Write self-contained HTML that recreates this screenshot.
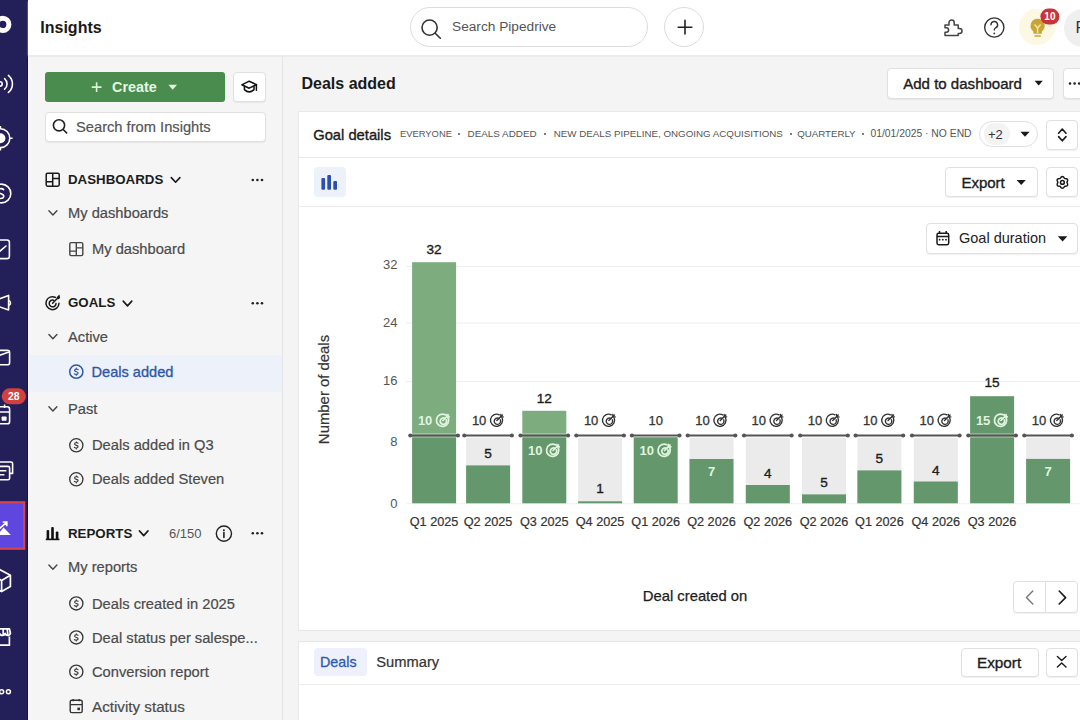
<!DOCTYPE html>
<html><head><meta charset="utf-8">
<style>
*{box-sizing:border-box;margin:0;padding:0}
html,body{width:1080px;height:720px;overflow:hidden;background:#f5f5f5;font-family:"Liberation Sans",sans-serif;color:#1f1f1f}
.a{position:absolute}
.t{position:absolute;white-space:nowrap;line-height:1}
#nav{left:0;top:0;width:28px;height:720px;background:#221f59;border-right:1.5px solid #17153c}
#top{left:28px;top:0;width:1052px;height:55px;background:#fff;box-shadow:0 1px 1.5px #e4e4e4}
#lp{left:28px;top:55px;width:255px;height:665px;background:#f5f5f5;border-right:1px solid #e4e4e4}
#main{left:283px;top:55px;width:797px;height:665px;background:#f4f4f4}
.card{background:#fff;border:1px solid #e8e8e8}
.btn{position:absolute;background:#fff;border:1px solid #e0e0e0;border-radius:4px;box-shadow:0 1px 1px rgba(0,0,0,.06)}
.item{color:#4b4b4b;font-size:14.7px;-webkit-text-stroke:0.2px currentColor}
.meta{top:129px;color:#555}.dot{top:132.8px;width:2px;height:2px;border-radius:1px;background:#555}
.med{color:#1c1c1c;-webkit-text-stroke:0.35px #1c1c1c}
.hdr{font-weight:700;font-size:13.3px;color:#1c1c1c}
</style></head><body>
<div id="nav" class="a"></div>
<div id="top" class="a"></div>
<div id="lp" class="a"></div>
<div id="main" class="a"></div>
<div class="a" style="left:28px;top:55px;width:1052px;height:2px;background:#ebebeb"></div>

<!-- top bar -->
<div class="t" style="left:40.3px;top:20px;font-size:16px;font-weight:700;color:#1a1a1a">Insights</div>
<div class="a" style="left:410px;top:7px;width:238px;height:40px;border:1px solid #dcdcdc;border-radius:20px;background:#fff"></div>
<div class="t" style="left:452px;top:20px;font-size:13.7px;color:#555">Search Pipedrive</div>
<div class="a" style="left:664px;top:7px;width:40px;height:40px;border:1px solid #dcdcdc;border-radius:20px;background:#fff"></div>
<div class="a" style="left:1019px;top:9px;width:36px;height:36px;border-radius:18px;background:#fcf8e2"></div>
<div class="a" style="left:1064px;top:9px;width:38px;height:38px;border-radius:19px;background:#efefef"></div>
<div class="t" style="left:1075.5px;top:19.5px;font-size:16px;color:#333">F</div>

<!-- left panel -->
<div class="a" style="left:45px;top:72px;width:180px;height:30px;background:#4a8c4e;border-radius:3px"></div>
<div class="t" style="left:112px;top:80px;font-size:14.4px;font-weight:700;color:#e3f7e3">Create</div>
<div class="btn" style="left:233px;top:72px;width:33px;height:30px"></div>
<div class="btn" style="left:45px;top:112px;width:221px;height:30px"></div>
<div class="t item" style="left:76px;top:120px;color:#555">Search from Insights</div>

<div class="t hdr" style="left:68px;top:173px">DASHBOARDS</div>
<div class="t item" style="left:68px;top:206px">My dashboards</div>
<div class="t item" style="left:92px;top:242px">My dashboard</div>

<div class="t hdr" style="left:68px;top:296px">GOALS</div>
<div class="t item" style="left:68px;top:330px">Active</div>
<div class="a" style="left:29px;top:355px;width:253px;height:37px;background:#edf1f9"></div>
<div class="t item" style="left:91.5px;top:364.6px;color:#2f56a6;font-size:14.6px;-webkit-text-stroke:0.3px #2f56a6">Deals added</div>
<div class="t item" style="left:68px;top:402px">Past</div>
<div class="t item" style="left:92px;top:438px">Deals added in Q3</div>
<div class="t item" style="left:92px;top:472px">Deals added Steven</div>

<div class="t hdr" style="left:68px;top:527px">REPORTS</div>
<div class="t" style="left:169px;top:527px;font-size:13px;color:#555">6/150</div>
<div class="t item" style="left:68px;top:560px">My reports</div>
<div class="t item" style="left:92px;top:597px">Deals created in 2025</div>
<div class="t item" style="left:92px;top:630.8px">Deal status per salespe...</div>
<div class="t item" style="left:92px;top:665px">Conversion report</div>
<div class="t item" style="left:92px;top:698.6px;font-size:15.2px">Activity status</div>

<!-- main -->
<div class="t" style="left:301.5px;top:75.5px;font-size:16px;font-weight:700;color:#1a1a1a">Deals added</div>
<div class="btn" style="left:887px;top:68px;width:167px;height:31px"></div>
<div class="t med" style="left:903.2px;top:75.7px;font-size:15.06px">Add to dashboard</div>
<div class="btn" style="left:1063px;top:68px;width:40px;height:31px"></div>

<div class="a card" style="left:298px;top:111px;width:800px;height:520px"></div>
<div class="a" style="left:298px;top:157px;width:782px;height:1px;background:#e8e8e8"></div>
<div class="a" style="left:298px;top:206px;width:782px;height:1px;background:#ececec"></div>
<div class="t med" style="left:313.2px;top:128px;font-size:14.74px">Goal details</div>
<div class="t meta" style="left:400px;font-size:9.4px">EVERYONE</div>
<div class="t meta" style="left:467.5px;font-size:9.9px">DEALS ADDED</div>
<div class="t meta" style="left:553.8px;font-size:9.78px">NEW DEALS PIPELINE, ONGOING ACQUISITIONS</div>
<div class="t meta" style="left:797.2px;font-size:9.7px">QUARTERLY</div>
<div class="t meta" style="left:870.4px;font-size:10.35px;top:128.6px">01/01/2025 · NO END</div>
<div class="a dot" style="left:458.4px"></div><div class="a dot" style="left:544.4px"></div><div class="a dot" style="left:789.5px"></div><div class="a dot" style="left:861.7px"></div>
<div class="a" style="left:979px;top:121px;width:59px;height:26px;border:1px solid #e0e0e0;border-radius:13px;background:#fff"></div>
<div class="a" style="left:984px;top:123px;width:26px;height:22px;border-radius:11px;background:#f3f3f3"></div>
<div class="t" style="left:988px;top:128px;font-size:13px;color:#333">+2</div>
<div class="btn" style="left:1046px;top:120px;width:32px;height:30px"></div>

<div class="a" style="left:314px;top:167px;width:32px;height:30px;background:#edf1f9;border-radius:4px"></div>
<div class="btn" style="left:945px;top:167px;width:93px;height:30px"></div>
<div class="t med" style="left:961.4px;top:174.8px;font-size:15px">Export</div>
<div class="btn" style="left:1046px;top:167px;width:32px;height:30px"></div>

<div class="btn" style="left:926px;top:223px;width:152px;height:31px"></div>
<div class="t" style="left:959px;top:231px;font-size:14.5px;color:#222">Goal duration</div>

<div class="t med" style="left:642.8px;top:589px;font-size:14.8px;-webkit-text-stroke:0.25px #1c1c1c">Deal created on</div>
<div class="btn" style="left:1013px;top:581px;width:65px;height:32px"></div>
<div class="a" style="left:1045px;top:582px;width:1px;height:30px;background:#e0e0e0"></div>

<div class="a card" style="left:298px;top:641px;width:800px;height:100px"></div>
<div class="a" style="left:298px;top:684px;width:782px;height:1px;background:#ececec"></div>
<div class="a" style="left:314px;top:648px;width:53px;height:28px;background:#eef1fb;border-radius:4px"></div>
<div class="t med" style="left:320px;top:655.1px;font-size:14.3px;color:#2f5bb0;-webkit-text-stroke:0.3px #2f5bb0">Deals</div>
<div class="t med" style="left:376.3px;top:655.1px;font-size:14.7px;color:#333;-webkit-text-stroke:0.2px #333">Summary</div>
<div class="btn" style="left:961px;top:648px;width:78px;height:29px"></div>
<div class="t med" style="left:977px;top:655.1px;font-size:15.3px">Export</div>
<div class="btn" style="left:1046px;top:648px;width:32px;height:29px"></div>

<!-- CHART -->
<svg class="a" style="left:0;top:0" width="1080" height="720" id="chart">
<rect x="406" y="266.0" width="674" height="1" fill="#ededed"/>
<rect x="406" y="322.5" width="674" height="1" fill="#ededed"/>
<rect x="406" y="381.0" width="674" height="1" fill="#ededed"/>
<rect x="406" y="503.3" width="674" height="1" fill="#f0f0f0"/>
<text x="397.5" y="269.1" text-anchor="end" font-size="13" fill="#555">32</text>
<text x="397.5" y="327.2" text-anchor="end" font-size="13" fill="#555">24</text>
<text x="397.5" y="385.4" text-anchor="end" font-size="13" fill="#555">16</text>
<text x="397.5" y="445.6" text-anchor="end" font-size="13" fill="#555">8</text>
<text x="397.5" y="508.1" text-anchor="end" font-size="13" fill="#555">0</text>
<rect x="412.1" y="262.2" width="44" height="173.3" fill="#7dac7f"/>
<rect x="412.1" y="435.5" width="44" height="67.8" fill="#65976c"/>
<rect x="466.1" y="437.5" width="44" height="65.8" fill="#eaebea"/>
<rect x="466.1" y="465.4" width="44" height="37.9" fill="#65976c"/>
<rect x="522.3" y="410.8" width="44" height="24.7" fill="#7dac7f"/>
<rect x="522.3" y="435.5" width="44" height="67.8" fill="#65976c"/>
<rect x="578.1" y="437.5" width="44" height="65.8" fill="#eaebea"/>
<rect x="578.1" y="501.3" width="44" height="2.0" fill="#65976c"/>
<rect x="633.7" y="437" width="44" height="66.3" fill="#65976c"/>
<rect x="689.5" y="437.5" width="44" height="65.8" fill="#eaebea"/>
<rect x="689.5" y="459" width="44" height="44.3" fill="#65976c"/>
<rect x="745.8" y="437.5" width="44" height="65.8" fill="#eaebea"/>
<rect x="745.8" y="485" width="44" height="18.3" fill="#65976c"/>
<rect x="802.0" y="437.5" width="44" height="65.8" fill="#eaebea"/>
<rect x="802.0" y="494.4" width="44" height="8.9" fill="#65976c"/>
<rect x="857.4" y="437.5" width="44" height="65.8" fill="#eaebea"/>
<rect x="857.4" y="470.4" width="44" height="32.9" fill="#65976c"/>
<rect x="913.8" y="437.5" width="44" height="65.8" fill="#eaebea"/>
<rect x="913.8" y="481.5" width="44" height="21.8" fill="#65976c"/>
<rect x="970.1" y="396.2" width="44" height="107.1" fill="#65976c"/>
<rect x="1026.1" y="437.5" width="44" height="65.8" fill="#eaebea"/>
<rect x="1026.1" y="458.9" width="44" height="44.4" fill="#65976c"/>
<line x1="409.3" y1="435.5" x2="458.9" y2="435.5" stroke="#fff" stroke-opacity="0.35" stroke-width="4.6"/>
<line x1="409.3" y1="435.5" x2="458.9" y2="435.5" stroke="#555" stroke-width="2.2"/>
<circle cx="410.3" cy="435.5" r="2.1" fill="#555"/><circle cx="457.9" cy="435.5" r="2.1" fill="#555"/>
<line x1="463.3" y1="435.5" x2="512.9" y2="435.5" stroke="#fff" stroke-opacity="0.35" stroke-width="4.6"/>
<line x1="463.3" y1="435.5" x2="512.9" y2="435.5" stroke="#555" stroke-width="2.2"/>
<circle cx="464.3" cy="435.5" r="2.1" fill="#555"/><circle cx="511.9" cy="435.5" r="2.1" fill="#555"/>
<line x1="519.5" y1="435.5" x2="569.1" y2="435.5" stroke="#fff" stroke-opacity="0.35" stroke-width="4.6"/>
<line x1="519.5" y1="435.5" x2="569.1" y2="435.5" stroke="#555" stroke-width="2.2"/>
<circle cx="520.5" cy="435.5" r="2.1" fill="#555"/><circle cx="568.1" cy="435.5" r="2.1" fill="#555"/>
<line x1="575.3" y1="435.5" x2="624.9" y2="435.5" stroke="#fff" stroke-opacity="0.35" stroke-width="4.6"/>
<line x1="575.3" y1="435.5" x2="624.9" y2="435.5" stroke="#555" stroke-width="2.2"/>
<circle cx="576.3" cy="435.5" r="2.1" fill="#555"/><circle cx="623.9" cy="435.5" r="2.1" fill="#555"/>
<line x1="630.9" y1="435.5" x2="680.5" y2="435.5" stroke="#fff" stroke-opacity="0.35" stroke-width="4.6"/>
<line x1="630.9" y1="435.5" x2="680.5" y2="435.5" stroke="#555" stroke-width="2.2"/>
<circle cx="631.9" cy="435.5" r="2.1" fill="#555"/><circle cx="679.5" cy="435.5" r="2.1" fill="#555"/>
<line x1="686.7" y1="435.5" x2="736.3" y2="435.5" stroke="#fff" stroke-opacity="0.35" stroke-width="4.6"/>
<line x1="686.7" y1="435.5" x2="736.3" y2="435.5" stroke="#555" stroke-width="2.2"/>
<circle cx="687.7" cy="435.5" r="2.1" fill="#555"/><circle cx="735.3" cy="435.5" r="2.1" fill="#555"/>
<line x1="743.0" y1="435.5" x2="792.6" y2="435.5" stroke="#fff" stroke-opacity="0.35" stroke-width="4.6"/>
<line x1="743.0" y1="435.5" x2="792.6" y2="435.5" stroke="#555" stroke-width="2.2"/>
<circle cx="744.0" cy="435.5" r="2.1" fill="#555"/><circle cx="791.6" cy="435.5" r="2.1" fill="#555"/>
<line x1="799.2" y1="435.5" x2="848.8" y2="435.5" stroke="#fff" stroke-opacity="0.35" stroke-width="4.6"/>
<line x1="799.2" y1="435.5" x2="848.8" y2="435.5" stroke="#555" stroke-width="2.2"/>
<circle cx="800.2" cy="435.5" r="2.1" fill="#555"/><circle cx="847.8" cy="435.5" r="2.1" fill="#555"/>
<line x1="854.6" y1="435.5" x2="904.2" y2="435.5" stroke="#fff" stroke-opacity="0.35" stroke-width="4.6"/>
<line x1="854.6" y1="435.5" x2="904.2" y2="435.5" stroke="#555" stroke-width="2.2"/>
<circle cx="855.6" cy="435.5" r="2.1" fill="#555"/><circle cx="903.2" cy="435.5" r="2.1" fill="#555"/>
<line x1="911.0" y1="435.5" x2="960.6" y2="435.5" stroke="#fff" stroke-opacity="0.35" stroke-width="4.6"/>
<line x1="911.0" y1="435.5" x2="960.6" y2="435.5" stroke="#555" stroke-width="2.2"/>
<circle cx="912.0" cy="435.5" r="2.1" fill="#555"/><circle cx="959.6" cy="435.5" r="2.1" fill="#555"/>
<line x1="967.3" y1="435.5" x2="1016.9" y2="435.5" stroke="#fff" stroke-opacity="0.35" stroke-width="4.6"/>
<line x1="967.3" y1="435.5" x2="1016.9" y2="435.5" stroke="#555" stroke-width="2.2"/>
<circle cx="968.3" cy="435.5" r="2.1" fill="#555"/><circle cx="1015.9" cy="435.5" r="2.1" fill="#555"/>
<line x1="1023.3" y1="435.5" x2="1072.9" y2="435.5" stroke="#fff" stroke-opacity="0.35" stroke-width="4.6"/>
<line x1="1023.3" y1="435.5" x2="1072.9" y2="435.5" stroke="#555" stroke-width="2.2"/>
<circle cx="1024.3" cy="435.5" r="2.1" fill="#555"/><circle cx="1071.9" cy="435.5" r="2.1" fill="#555"/>
<text x="417.9" y="424.9" font-size="13" fill="#dff5df" font-weight="700" stroke="#dff5df" stroke-width="0">10</text><g transform="translate(436.4,413.3)" fill="none" stroke="#dff5df" stroke-width="1.75" stroke-linecap="round"><path d="M11.6 4.2 A6.1 6.1 0 1 1 8.9 1.5"/><path d="M8.6 5.1 A3.2 3.2 0 1 0 9.9 6.5"/><path d="M6.5 7.2 L12 1.7"/><path d="M10.4 1.2 L10.6 3.4 L12.8 3.6"/></g>
<text x="434.1" y="253.5" text-anchor="middle" font-size="13.6" font-weight="400" fill="#1c1c1c" stroke="#1c1c1c" stroke-width="0.35">32</text>
<text x="471.9" y="424.9" font-size="13" fill="#333" font-weight="400" stroke="#333" stroke-width="0.3">10</text><g transform="translate(490.4,413.3)" fill="none" stroke="#333" stroke-width="1.4" stroke-linecap="round"><path d="M11.6 4.2 A6.1 6.1 0 1 1 8.9 1.5"/><path d="M8.6 5.1 A3.2 3.2 0 1 0 9.9 6.5"/><path d="M6.5 7.2 L12 1.7"/><path d="M10.4 1.2 L10.6 3.4 L12.8 3.6"/></g>
<text x="488.1" y="458.0" text-anchor="middle" font-size="13.6" font-weight="400" fill="#1c1c1c" stroke="#1c1c1c" stroke-width="0.35">5</text>
<text x="544.3" y="402.7" text-anchor="middle" font-size="13.6" font-weight="400" fill="#1c1c1c" stroke="#1c1c1c" stroke-width="0.35">12</text>
<text x="528.0" y="454.9" font-size="13" fill="#dff5df" font-weight="700" stroke="#dff5df" stroke-width="0">10</text><g transform="translate(546.5,443.3)" fill="none" stroke="#dff5df" stroke-width="1.75" stroke-linecap="round"><path d="M11.6 4.2 A6.1 6.1 0 1 1 8.9 1.5"/><path d="M8.6 5.1 A3.2 3.2 0 1 0 9.9 6.5"/><path d="M6.5 7.2 L12 1.7"/><path d="M10.4 1.2 L10.6 3.4 L12.8 3.6"/></g>
<text x="583.9" y="424.9" font-size="13" fill="#333" font-weight="400" stroke="#333" stroke-width="0.3">10</text><g transform="translate(602.4,413.3)" fill="none" stroke="#333" stroke-width="1.4" stroke-linecap="round"><path d="M11.6 4.2 A6.1 6.1 0 1 1 8.9 1.5"/><path d="M8.6 5.1 A3.2 3.2 0 1 0 9.9 6.5"/><path d="M6.5 7.2 L12 1.7"/><path d="M10.4 1.2 L10.6 3.4 L12.8 3.6"/></g>
<text x="600.1" y="493.0" text-anchor="middle" font-size="13.6" font-weight="400" fill="#1c1c1c" stroke="#1c1c1c" stroke-width="0.35">1</text>
<text x="655.7" y="425.0" text-anchor="middle" font-size="13" font-weight="400" fill="#333" stroke="#333" stroke-width="0.25">10</text>
<text x="639.5" y="454.9" font-size="13" fill="#dff5df" font-weight="700" stroke="#dff5df" stroke-width="0">10</text><g transform="translate(658.0,443.3)" fill="none" stroke="#dff5df" stroke-width="1.75" stroke-linecap="round"><path d="M11.6 4.2 A6.1 6.1 0 1 1 8.9 1.5"/><path d="M8.6 5.1 A3.2 3.2 0 1 0 9.9 6.5"/><path d="M6.5 7.2 L12 1.7"/><path d="M10.4 1.2 L10.6 3.4 L12.8 3.6"/></g>
<text x="695.2" y="424.9" font-size="13" fill="#333" font-weight="400" stroke="#333" stroke-width="0.3">10</text><g transform="translate(713.8,413.3)" fill="none" stroke="#333" stroke-width="1.4" stroke-linecap="round"><path d="M11.6 4.2 A6.1 6.1 0 1 1 8.9 1.5"/><path d="M8.6 5.1 A3.2 3.2 0 1 0 9.9 6.5"/><path d="M6.5 7.2 L12 1.7"/><path d="M10.4 1.2 L10.6 3.4 L12.8 3.6"/></g>
<text x="711.5" y="476.4" text-anchor="middle" font-size="13" font-weight="700" fill="#dff5df" stroke="#dff5df" stroke-width="0">7</text>
<text x="751.5" y="424.9" font-size="13" fill="#333" font-weight="400" stroke="#333" stroke-width="0.3">10</text><g transform="translate(770.0,413.3)" fill="none" stroke="#333" stroke-width="1.4" stroke-linecap="round"><path d="M11.6 4.2 A6.1 6.1 0 1 1 8.9 1.5"/><path d="M8.6 5.1 A3.2 3.2 0 1 0 9.9 6.5"/><path d="M6.5 7.2 L12 1.7"/><path d="M10.4 1.2 L10.6 3.4 L12.8 3.6"/></g>
<text x="767.8" y="478.2" text-anchor="middle" font-size="13.6" font-weight="400" fill="#1c1c1c" stroke="#1c1c1c" stroke-width="0.35">4</text>
<text x="807.8" y="424.9" font-size="13" fill="#333" font-weight="400" stroke="#333" stroke-width="0.3">10</text><g transform="translate(826.2,413.3)" fill="none" stroke="#333" stroke-width="1.4" stroke-linecap="round"><path d="M11.6 4.2 A6.1 6.1 0 1 1 8.9 1.5"/><path d="M8.6 5.1 A3.2 3.2 0 1 0 9.9 6.5"/><path d="M6.5 7.2 L12 1.7"/><path d="M10.4 1.2 L10.6 3.4 L12.8 3.6"/></g>
<text x="824.0" y="487.2" text-anchor="middle" font-size="13.6" font-weight="400" fill="#1c1c1c" stroke="#1c1c1c" stroke-width="0.35">5</text>
<text x="863.1" y="424.9" font-size="13" fill="#333" font-weight="400" stroke="#333" stroke-width="0.3">10</text><g transform="translate(881.6,413.3)" fill="none" stroke="#333" stroke-width="1.4" stroke-linecap="round"><path d="M11.6 4.2 A6.1 6.1 0 1 1 8.9 1.5"/><path d="M8.6 5.1 A3.2 3.2 0 1 0 9.9 6.5"/><path d="M6.5 7.2 L12 1.7"/><path d="M10.4 1.2 L10.6 3.4 L12.8 3.6"/></g>
<text x="879.4" y="463.1" text-anchor="middle" font-size="13.6" font-weight="400" fill="#1c1c1c" stroke="#1c1c1c" stroke-width="0.35">5</text>
<text x="919.5" y="424.9" font-size="13" fill="#333" font-weight="400" stroke="#333" stroke-width="0.3">10</text><g transform="translate(938.0,413.3)" fill="none" stroke="#333" stroke-width="1.4" stroke-linecap="round"><path d="M11.6 4.2 A6.1 6.1 0 1 1 8.9 1.5"/><path d="M8.6 5.1 A3.2 3.2 0 1 0 9.9 6.5"/><path d="M6.5 7.2 L12 1.7"/><path d="M10.4 1.2 L10.6 3.4 L12.8 3.6"/></g>
<text x="935.8" y="475.0" text-anchor="middle" font-size="13.6" font-weight="400" fill="#1c1c1c" stroke="#1c1c1c" stroke-width="0.35">4</text>
<text x="992.1" y="387.2" text-anchor="middle" font-size="13.6" font-weight="400" fill="#1c1c1c" stroke="#1c1c1c" stroke-width="0.35">15</text>
<text x="975.9" y="424.9" font-size="13" fill="#dff5df" font-weight="700" stroke="#dff5df" stroke-width="0">15</text><g transform="translate(994.4,413.3)" fill="none" stroke="#dff5df" stroke-width="1.75" stroke-linecap="round"><path d="M11.6 4.2 A6.1 6.1 0 1 1 8.9 1.5"/><path d="M8.6 5.1 A3.2 3.2 0 1 0 9.9 6.5"/><path d="M6.5 7.2 L12 1.7"/><path d="M10.4 1.2 L10.6 3.4 L12.8 3.6"/></g>
<text x="1031.8" y="424.9" font-size="13" fill="#333" font-weight="400" stroke="#333" stroke-width="0.3">10</text><g transform="translate(1050.3,413.3)" fill="none" stroke="#333" stroke-width="1.4" stroke-linecap="round"><path d="M11.6 4.2 A6.1 6.1 0 1 1 8.9 1.5"/><path d="M8.6 5.1 A3.2 3.2 0 1 0 9.9 6.5"/><path d="M6.5 7.2 L12 1.7"/><path d="M10.4 1.2 L10.6 3.4 L12.8 3.6"/></g>
<text x="1048.1" y="475.7" text-anchor="middle" font-size="13" font-weight="700" fill="#dff5df" stroke="#dff5df" stroke-width="0">7</text>
<text x="434.1" y="525.8" text-anchor="middle" font-size="12.7" fill="#333" stroke="#333" stroke-width="0.2">Q1 2025</text>
<text x="488.1" y="525.8" text-anchor="middle" font-size="12.7" fill="#333" stroke="#333" stroke-width="0.2">Q2 2025</text>
<text x="544.3" y="525.8" text-anchor="middle" font-size="12.7" fill="#333" stroke="#333" stroke-width="0.2">Q3 2025</text>
<text x="600.1" y="525.8" text-anchor="middle" font-size="12.7" fill="#333" stroke="#333" stroke-width="0.2">Q4 2025</text>
<text x="655.7" y="525.8" text-anchor="middle" font-size="12.7" fill="#333" stroke="#333" stroke-width="0.2">Q1 2026</text>
<text x="711.5" y="525.8" text-anchor="middle" font-size="12.7" fill="#333" stroke="#333" stroke-width="0.2">Q2 2026</text>
<text x="767.8" y="525.8" text-anchor="middle" font-size="12.7" fill="#333" stroke="#333" stroke-width="0.2">Q2 2026</text>
<text x="824.0" y="525.8" text-anchor="middle" font-size="12.7" fill="#333" stroke="#333" stroke-width="0.2">Q2 2026</text>
<text x="879.4" y="525.8" text-anchor="middle" font-size="12.7" fill="#333" stroke="#333" stroke-width="0.2">Q1 2026</text>
<text x="935.8" y="525.8" text-anchor="middle" font-size="12.7" fill="#333" stroke="#333" stroke-width="0.2">Q4 2026</text>
<text x="992.1" y="525.8" text-anchor="middle" font-size="12.7" fill="#333" stroke="#333" stroke-width="0.2">Q3 2026</text>
<text transform="translate(328.5,389.5) rotate(-90)" text-anchor="middle" font-size="14.9" fill="#333" stroke="#333" stroke-width="0.2">Number of deals</text>
</svg>
<!-- ICONS -->
<svg class="a" style="left:0;top:0" width="1080" height="720" id="icons">
<g fill="none" stroke="#333" stroke-width="1.6" stroke-linecap="round"><circle cx="429.6" cy="27.6" r="7.6"/><path d="M435.2 33.2 L440.3 38.2"/></g>
<g stroke="#222" stroke-width="1.6" stroke-linecap="round"><path d="M678.2 27.2 H691.8 M685 20.4 V34"/></g>
<path fill="none" stroke="#444" stroke-width="1.5" stroke-linejoin="round" d="M945 25 h4 v-2.4 a2.6 2.6 0 0 1 5.2 0 v2.4 h4 v3.6 h1.3 a2.5 2.5 0 0 1 0 5 h-1.3 v2 h-13.2 v-3.4 h1.4 a2.2 2.2 0 0 0 0 -4.4 h-1.4 z"/>
<circle cx="994.3" cy="27.5" r="9.6" fill="none" stroke="#333" stroke-width="1.4"/>
<path d="M991 24.8 a3.3 3.3 0 1 1 4.6 3 c-1 .5 -1.3 1 -1.3 2.2" fill="none" stroke="#333" stroke-width="1.4" stroke-linecap="round"/><circle cx="994.3" cy="33.4" r="0.9" fill="#333"/>
<path fill="#caa434" d="M1037.6 18.8 a7 7 0 0 0 -4.2 12.6 v2.3 h8.4 v-2.3 a7 7 0 0 0 -4.2 -12.6z"/>
<path d="M1034.6 24.5 L1037.6 28 L1040.6 24.5 M1037.6 28 V33" fill="none" stroke="#f3e3a8" stroke-width="1.5"/>
<rect x="1034.2" y="35.2" width="6.8" height="1.6" rx=".8" fill="#caa434"/>
<rect x="1040.4" y="8.6" width="19" height="16" rx="8" fill="#c8343a"/>
<text x="1049.9" y="20.3" text-anchor="middle" font-size="10" font-weight="700" fill="#fff">10</text>
<path d="M91.7 87.1 H101.5 M96.6 82.2 V92" stroke="#d9f5d9" stroke-width="1.6"/>
<path d="M168.4 84.8 H177 L172.7 89.8 Z" fill="#e3f7e3"/>
<g fill="none" stroke="#111" stroke-width="1.5" stroke-linejoin="round" stroke-linecap="round"><path d="M241.8 84.8 L249.2 81.2 L256.4 84.6 L249.2 88.2 Z"/><path d="M244.4 86.4 V89.6 Q249.2 94.2 254 89.6 V86.4"/><path d="M256.4 84.6 V90.2"/></g>
<g fill="none" stroke="#222" stroke-width="1.6" stroke-linecap="round"><circle cx="59" cy="125.3" r="5.6"/><path d="M63.2 129.5 L66.6 132.9"/></g>
<g fill="none" stroke="#1a1a1a" stroke-width="1.5"><rect x="46.2" y="173.2" width="13" height="13" rx="1.4"/><path d="M52.7 173.2 V186.2 M46.2 181.7 H52.7 M52.7 178.5 H59.2"/></g>
<g fill="none" stroke="#444" stroke-width="1.4"><rect x="69.8" y="242.6" width="13" height="13" rx="1.4"/><path d="M76.3 242.6 V255.6 M69.8 251.1 H76.3 M76.3 247.9 H82.8"/></g>
<path d="M171.3 177.6 L175.6 182.2 L179.9 177.6" fill="none" stroke="#1a1a1a" stroke-width="1.6" stroke-linecap="round" stroke-linejoin="round"/>
<path d="M123.2 301.1 L127.5 305.9 L131.8 301.1" fill="none" stroke="#1a1a1a" stroke-width="1.6" stroke-linecap="round" stroke-linejoin="round"/>
<path d="M139.4 530.9 L143.7 535.6 L148.0 530.9" fill="none" stroke="#1a1a1a" stroke-width="1.6" stroke-linecap="round" stroke-linejoin="round"/>
<path d="M48.9 210.8 L52.9 215.0 L56.9 210.8" fill="none" stroke="#444" stroke-width="1.4" stroke-linecap="round" stroke-linejoin="round"/>
<path d="M48.9 334.5 L52.9 338.7 L56.9 334.5" fill="none" stroke="#444" stroke-width="1.4" stroke-linecap="round" stroke-linejoin="round"/>
<path d="M48.9 406.7 L52.9 410.9 L56.9 406.7" fill="none" stroke="#444" stroke-width="1.4" stroke-linecap="round" stroke-linejoin="round"/>
<path d="M48.9 565.1 L52.9 569.3 L56.9 565.1" fill="none" stroke="#444" stroke-width="1.4" stroke-linecap="round" stroke-linejoin="round"/>
<circle cx="252.8" cy="180" r="1.3" fill="#222"/><circle cx="257.4" cy="180" r="1.3" fill="#222"/><circle cx="262" cy="180" r="1.3" fill="#222"/>
<circle cx="252.8" cy="303.3" r="1.3" fill="#222"/><circle cx="257.4" cy="303.3" r="1.3" fill="#222"/><circle cx="262" cy="303.3" r="1.3" fill="#222"/>
<circle cx="252.8" cy="533.3" r="1.3" fill="#222"/><circle cx="257.4" cy="533.3" r="1.3" fill="#222"/><circle cx="262" cy="533.3" r="1.3" fill="#222"/>
<g fill="none" stroke="#1a1a1a" stroke-width="1.5" stroke-linecap="round"><path d="M59 303.3 A6.5 6.5 0 1 1 55.5 297.4"/><path d="M56 303.6 A3.4 3.4 0 1 1 53.6 300.2"/><path d="M52.6 303.2 L58 297.8"/></g>
<path d="M56.6 297.2 L59.4 294.6 L60.2 298 L58 299.6 Z" fill="#1a1a1a"/>
<g fill="none" stroke="#3058a8" stroke-width="1.5" stroke-linecap="round"><circle cx="76.3" cy="371.7" r="6.6"/><path transform="translate(76.3 371.7) scale(0.82)" d="M2.1 -2.6 C1 -3.6 -2.4 -3.4 -2 -1.4 C-1.6 0.4 2.6 -0.2 2.2 1.8 C1.9 3.6 -1.4 3.6 -2.4 2.6 M0 -4.4 V-3.3 M0 3.4 V4.4"/></g>
<g fill="none" stroke="#383838" stroke-width="1.35" stroke-linecap="round"><circle cx="76.3" cy="445.3" r="6.6"/><path transform="translate(76.3 445.3) scale(0.82)" d="M2.1 -2.6 C1 -3.6 -2.4 -3.4 -2 -1.4 C-1.6 0.4 2.6 -0.2 2.2 1.8 C1.9 3.6 -1.4 3.6 -2.4 2.6 M0 -4.4 V-3.3 M0 3.4 V4.4"/></g>
<g fill="none" stroke="#383838" stroke-width="1.35" stroke-linecap="round"><circle cx="76.3" cy="479.3" r="6.6"/><path transform="translate(76.3 479.3) scale(0.82)" d="M2.1 -2.6 C1 -3.6 -2.4 -3.4 -2 -1.4 C-1.6 0.4 2.6 -0.2 2.2 1.8 C1.9 3.6 -1.4 3.6 -2.4 2.6 M0 -4.4 V-3.3 M0 3.4 V4.4"/></g>
<g fill="none" stroke="#383838" stroke-width="1.35" stroke-linecap="round"><circle cx="76.3" cy="603.4" r="6.6"/><path transform="translate(76.3 603.4) scale(0.82)" d="M2.1 -2.6 C1 -3.6 -2.4 -3.4 -2 -1.4 C-1.6 0.4 2.6 -0.2 2.2 1.8 C1.9 3.6 -1.4 3.6 -2.4 2.6 M0 -4.4 V-3.3 M0 3.4 V4.4"/></g>
<g fill="none" stroke="#383838" stroke-width="1.35" stroke-linecap="round"><circle cx="76.3" cy="637.4" r="6.6"/><path transform="translate(76.3 637.4) scale(0.82)" d="M2.1 -2.6 C1 -3.6 -2.4 -3.4 -2 -1.4 C-1.6 0.4 2.6 -0.2 2.2 1.8 C1.9 3.6 -1.4 3.6 -2.4 2.6 M0 -4.4 V-3.3 M0 3.4 V4.4"/></g>
<g fill="none" stroke="#383838" stroke-width="1.35" stroke-linecap="round"><circle cx="76.3" cy="671.7" r="6.6"/><path transform="translate(76.3 671.7) scale(0.82)" d="M2.1 -2.6 C1 -3.6 -2.4 -3.4 -2 -1.4 C-1.6 0.4 2.6 -0.2 2.2 1.8 C1.9 3.6 -1.4 3.6 -2.4 2.6 M0 -4.4 V-3.3 M0 3.4 V4.4"/></g>
<g fill="#111"><rect x="46.6" y="530" width="2.6" height="9.6" rx="1"/><rect x="51.2" y="527" width="2.6" height="12.6" rx="1"/><rect x="55.8" y="531.6" width="2.6" height="8" rx="1"/><rect x="45.8" y="538.6" width="13.6" height="1.6"/></g>
<circle cx="223.9" cy="533.6" r="7.6" fill="none" stroke="#222" stroke-width="1.4"/><circle cx="223.9" cy="530.3" r="1" fill="#222"/><path d="M223.9 532.6 V537.4" stroke="#222" stroke-width="1.6" stroke-linecap="round"/>
<g fill="none" stroke="#333" stroke-width="1.4"><rect x="70.2" y="700.2" width="12" height="12.4" rx="1.6"/><path d="M70.2 704.6 H82.2 M73.2 699.0 V701.2 M79.2 699.0 V701.2"/></g><rect x="77.4" y="707.6" width="2.6" height="2.6" fill="#333"/>
<path d="M1034.6 80.8 H1042.8 L1038.7 85.4 Z" fill="#1a1a1a"/>
<g fill="#222"><circle cx="1070" cy="83.5" r="1.3"/><circle cx="1074.6" cy="83.5" r="1.3"/><circle cx="1079.2" cy="83.5" r="1.3"/></g>
<path d="M1020.4 131.8 H1029.6 L1025 136.8 Z" fill="#1a1a1a"/>
<path d="M1058.6 133.2 L1062.3 129 L1066 133.2 M1058.6 136.6 L1062.3 140.8 L1066 136.6" fill="none" stroke="#1a1a1a" stroke-width="1.6" stroke-linecap="round" stroke-linejoin="round"/>
<g fill="#2c4fae"><rect x="321.4" y="178.1" width="3.7" height="11.7" rx="1"/><rect x="327.3" y="175" width="3.7" height="14.8" rx="1"/><rect x="333.3" y="180.9" width="3.7" height="8.9" rx="1"/></g>
<path d="M1016.6 180 H1025.8 L1021.2 185 Z" fill="#1a1a1a"/>
<g fill="none" stroke="#1a1a1a" stroke-width="1.5" stroke-linejoin="round"><path d="M1060.15 178.50 Q1062.40 174.40 1064.65 178.50 Q1069.33 178.40 1066.90 182.40 Q1069.33 186.40 1064.65 186.30 Q1062.40 190.40 1060.15 186.30 Q1055.47 186.40 1057.90 182.40 Q1055.47 178.40 1060.15 178.50 Z"/><circle cx="1062.4" cy="182.4" r="1.9"/></g>
<g fill="none" stroke="#1a1a1a" stroke-width="1.5"><rect x="937" y="233.3" width="11.7" height="11.4" rx="1.6"/><path d="M937 236.4 H948.7 M939.5 231 V233.4 M946.2 231 V233.4"/></g><g fill="#1a1a1a"><circle cx="939.6" cy="239.7" r=".9"/><circle cx="942.8" cy="239.7" r=".9"/><circle cx="946" cy="239.7" r=".9"/></g>
<path d="M1057.8 236.2 H1067.4 L1062.6 241.4 Z" fill="#1a1a1a"/>
<path d="M1032.8 591 L1026.4 597.6 L1032.8 604" fill="none" stroke="#777" stroke-width="1.4" stroke-linecap="round" stroke-linejoin="round"/>
<path d="M1059.2 591 L1065.6 597.6 L1059.2 604" fill="none" stroke="#1a1a1a" stroke-width="1.6" stroke-linecap="round" stroke-linejoin="round"/>
<path d="M1057.4 656.6 L1061.7 660.6 L1066 656.6 M1057.4 667 L1061.7 663 L1066 667" fill="none" stroke="#1a1a1a" stroke-width="1.4" stroke-linecap="round" stroke-linejoin="round"/>
<circle cx="2.8" cy="24.4" r="6.1" fill="none" stroke="#fff" stroke-width="5"/>
<g fill="none" stroke="#fff" stroke-width="1.6" stroke-linecap="round"><circle cx="0" cy="83.9" r="2.2"/><path d="M4.6 78.6 A7 7 0 0 1 4.6 89.2"/><path d="M8.4 75.4 A11 11 0 0 1 8.4 92.4"/></g>
<g fill="none" stroke="#fff" stroke-width="1.6"><circle cx="0.4" cy="138.2" r="9.4"/><path d="M9.8 138.2 H12.6 M0.4 128.8 V126 M0.4 147.6 V150.4"/></g><circle cx="0.4" cy="138.2" r="5" fill="#fff"/>
<g fill="none" stroke="#fff" stroke-width="1.6" stroke-linecap="round"><circle cx="1.4" cy="193.5" r="9.4"/><path d="M3.6 189.6 C2.2 188 -2.8 188.4 -2.4 191.4 C-2 193.8 4.2 193.2 3.8 196.4 C3.4 199 -1.8 199 -3 197.4"/></g>
<g fill="none" stroke="#fff" stroke-width="1.6" stroke-linecap="round" stroke-linejoin="round"><rect x="-8" y="240" width="17.4" height="18.6" rx="2.4"/><path d="M-1 252 L6 246"/></g>
<g fill="none" stroke="#fff" stroke-width="1.6" stroke-linejoin="round"><path d="M-4 300 L8.6 295.4 V310 L-4 305.6 Z"/><path d="M8.6 300.4 a2.6 2.6 0 0 1 0 5"/></g>
<g fill="none" stroke="#fff" stroke-width="1.6" stroke-linejoin="round"><rect x="-8" y="350.4" width="17.6" height="14.4" rx="2"/><path d="M-8 358 L9 352"/></g>
<g fill="none" stroke="#fff" stroke-width="1.6"><rect x="-8" y="406.8" width="17.6" height="17" rx="2.4"/><path d="M-8 412 H9.6 M4.6 404.6 V408"/></g><rect x="1.6" y="416.4" width="5" height="4.4" rx=".8" fill="#fff"/>
<rect x="1.7" y="388.3" width="24.3" height="16" rx="8" fill="#d0413f"/><text x="13.8" y="400" text-anchor="middle" font-size="10.4" font-weight="700" fill="#fff">28</text>
<g fill="none" stroke="#fff" stroke-width="1.6" stroke-linejoin="round"><path d="M-2 462 H11 a1.6 1.6 0 0 1 1.6 1.6 V473.4 H9.6"/><rect x="-8" y="466.4" width="17.6" height="13.4" rx="1.6"/><path d="M0 470.8 H6.4 M-2 474.8 H4.4"/></g>
<rect x="-2" y="502.3" width="26.2" height="46.4" fill="#5e46de" stroke="#d8434c" stroke-width="2.2"/>
<path d="M-3 535 L3.6 527.6 L10.8 535 Z" fill="#fff"/><path d="M-0.6 528.6 L6.6 522.4 M3.4 522 H6.8 V525.4" fill="none" stroke="#fff" stroke-width="1.7" stroke-linecap="round"/>
<g fill="none" stroke="#fff" stroke-width="1.7" stroke-linejoin="round"><path d="M-6 566.6 L10.4 575.2 V586.6 L1.6 591.6 L-8 586.6 M10.4 575.2 L1.6 580.4 V591.6 M1.6 580.4 L-8 575.4"/></g>
<g fill="none" stroke="#fff" stroke-width="1.7" stroke-linejoin="round"><path d="M-8 628.8 H9.4 L10.4 633.2 Q9.8 635.4 7.8 635.4 Q5.6 635.4 5.2 633.4 Q4.4 635.4 2.4 635.4 Q0.4 635.4 -0.2 633.4 M9.4 636.6 V645.2 H-8 M7.2 628.8 L7.8 634.4 M3.2 628.8 V634.4"/></g>
<g fill="none" stroke="#fff" stroke-width="1.5"><circle cx="1.6" cy="691.8" r="2"/><circle cx="8.4" cy="691.8" r="2"/></g>
</svg>
</body></html>
